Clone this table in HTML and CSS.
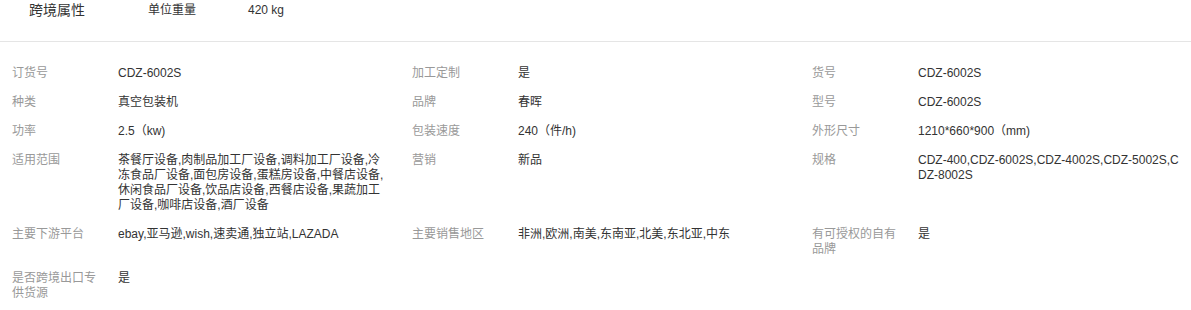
FILE: index.html
```html
<!DOCTYPE html>
<html lang="zh-CN">
<head>
<meta charset="utf-8">
<link rel="stylesheet" href="styles.css">
</head>
<body>
<div class="header">
  <span class="header-title">跨境属性</span>
  <span class="header-key">单位重量</span>
  <span class="header-val">420 kg</span>
</div>
<div class="attrs">
  <div class="item"><div class="label">订货号</div><div class="value">CDZ-6002S</div></div>
  <div class="item"><div class="label">加工定制</div><div class="value">是</div></div>
  <div class="item"><div class="label">货号</div><div class="value">CDZ-6002S</div></div>

  <div class="item"><div class="label">种类</div><div class="value">真空包装机</div></div>
  <div class="item"><div class="label">品牌</div><div class="value">春晖</div></div>
  <div class="item"><div class="label">型号</div><div class="value">CDZ-6002S</div></div>

  <div class="item"><div class="label">功率</div><div class="value">2.5（kw)</div></div>
  <div class="item"><div class="label">包装速度</div><div class="value">240（件/h)</div></div>
  <div class="item"><div class="label">外形尺寸</div><div class="value">1210*660*900（mm)</div></div>

  <div class="item"><div class="label">适用范围</div><div class="value">茶餐厅设备,肉制品加工厂设备,调料加工厂设备,冷冻食品厂设备,面包房设备,蛋糕房设备,中餐店设备,休闲食品厂设备,饮品店设备,西餐店设备,果蔬加工厂设备,咖啡店设备,酒厂设备</div></div>
  <div class="item"><div class="label">营销</div><div class="value">新品</div></div>
  <div class="item"><div class="label">规格</div><div class="value">CDZ-400,CDZ-6002S,CDZ-4002S,CDZ-5002S,CDZ-8002S</div></div>

  <div class="item"><div class="label">主要下游平台</div><div class="value">ebay,亚马逊,wish,速卖通,独立站,LAZADA</div></div>
  <div class="item"><div class="label">主要销售地区</div><div class="value">非洲,欧洲,南美,东南亚,北美,东北亚,中东</div></div>
  <div class="item"><div class="label">有可授权的自有品牌</div><div class="value">是</div></div>

  <div class="item"><div class="label">是否跨境出口专供货源</div><div class="value">是</div></div>
</div>
</body>
</html>
```
FILE: styles.css
```css
* { box-sizing: border-box; }
html, body { margin: 0; padding: 0; background: #fff; }
body {
  font-family: "Liberation Sans", Arial, "Noto Sans CJK SC", sans-serif;
  color: #333;
}
.header {
  height: 42px;
  border-bottom: 1px solid #e5e5e5;
  display: flex;
  align-items: flex-start;
  line-height: 20px;
}
.header-title {
  font-size: 14px;
  margin-left: 29px;
  width: 119px;
}
.header-key {
  font-size: 12px;
  width: 100px;
}
.header-val {
  font-size: 12px;
}
.attrs {
  display: grid;
  grid-template-columns: 400px 400px 391px;
  padding-top: 17px;
}
.item {
  display: flex;
  padding: 7px 0 7px 12px;
  font-size: 12px;
  line-height: 15px;
}
.label {
  width: 90px;
  margin-right: 16px;
  color: #999;
  flex: none;
}
.value {
  width: 266px;
  color: #333;
  word-break: break-all;
}
```
